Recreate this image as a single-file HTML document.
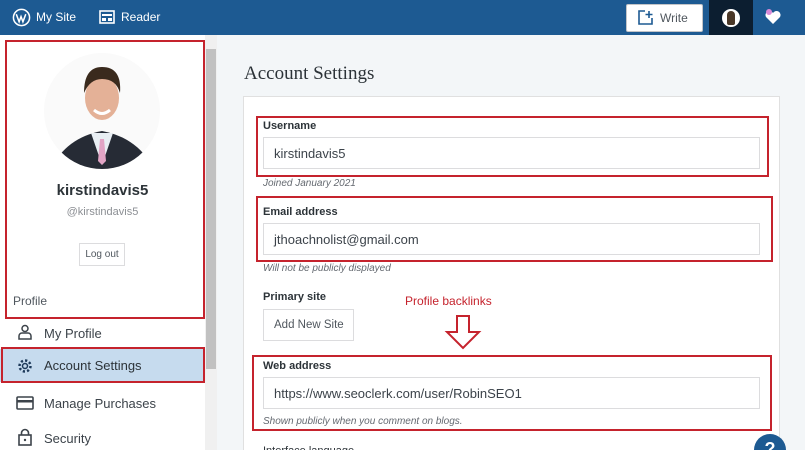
<!DOCTYPE html>
<html style="overflow:hidden;height:450px"><head><style>
*{box-sizing:border-box;margin:0;padding:0}
body{width:805px;height:450px;overflow:hidden;font-family:"Liberation Sans",sans-serif;background:#f3f6f8;position:relative;color:#2c3338}
.abs{position:absolute}
.top{left:0;top:0;width:805px;height:35px;background:#1d5a92}
.red{position:absolute;border:2px solid #c5232d}
.lbl{font-size:11px;font-weight:bold;color:#2c3338}
.inp{position:absolute;background:#fff;border:1px solid #dcdcde;font-size:13px;color:#3c434a;padding-left:10px;display:flex;align-items:center}
.hint{font-size:10px;font-style:italic;color:#646970}
.nav{position:absolute;left:0;width:205px;height:35px;display:flex;align-items:center;font-size:13px;color:#3c434a}
.nav span{margin-left:44px}
</style></head><body>
<div class="abs top"></div>
<svg class="abs" style="left:12px;top:8px" width="19" height="19" viewBox="0 0 20 20"><circle cx="10" cy="10" r="8.5" fill="none" stroke="#fff" stroke-width="1.6"/><path d="M4.5 6.5l3 8 2-5.5 2 5.5 3-8" fill="none" stroke="#fff" stroke-width="1.6"/></svg>
<div class="abs" style="left:36px;top:10px;color:#fff;font-size:12px">My Site</div>
<svg class="abs" style="left:99px;top:10px" width="16" height="14"><rect x="1" y="1" width="14" height="12" fill="none" stroke="#fff" stroke-width="1.6"/><rect x="3" y="4" width="10" height="2" fill="#fff"/><rect x="3" y="8" width="4" height="3" fill="#fff"/><rect x="9" y="8" width="4" height="3" fill="#fff"/></svg>
<div class="abs" style="left:121px;top:10px;color:#fff;font-size:12px">Reader</div>
<div class="abs" style="left:626px;top:4px;width:77px;height:28px;background:#fff;border-radius:2px;border:1px solid #c3c4c7"></div>
<svg class="abs" style="left:638px;top:10px" width="16" height="15"><path d="M7 1H1v13h13V8" fill="none" stroke="#1d5a92" stroke-width="1.6"/><path d="M11 1v7M7.5 4.5h7" stroke="#1d5a92" stroke-width="1.6"/></svg>
<div class="abs" style="left:660px;top:11px;font-size:12px;color:#50575e">Write</div>
<div class="abs" style="left:709px;top:0;width:44px;height:35px;background:#0c1e30"></div>
<div class="abs" style="left:722px;top:9px;width:18px;height:18px;border-radius:50%;background:#fff"></div>
<div class="abs" style="left:727px;top:11px;width:8px;height:14px;border-radius:4px 4px 2px 2px;background:#4a3828"></div>
<svg class="abs" style="left:764px;top:8px" width="18" height="18"><path d="M9 16L2 9a3.5 3.5 0 0 1 7-4 3.5 3.5 0 0 1 7 4z" fill="#fff"/><circle cx="5" cy="4" r="3" fill="#d98ad8"/></svg>

<div class="abs" style="left:0;top:35px;width:205px;height:415px;background:#fff"></div>
<div class="abs" style="left:205px;top:35px;width:12px;height:415px;background:#f0f0f0"></div>
<div class="abs" style="left:206px;top:49px;width:10px;height:320px;background:#c1c1c1"></div>

<svg class="abs" style="left:44px;top:53px" width="116" height="116" viewBox="0 0 116 116"><defs><clipPath id="c"><circle cx="58" cy="58" r="58"/></clipPath></defs><circle cx="58" cy="58" r="58" fill="#fafafa"/><g clip-path="url(#c)"><path d="M5 120 Q20 85 58 78 Q96 85 112 120z" fill="#262b35"/><path d="M47 80 L58 112 L69 80z" fill="#e8eef3"/><path d="M56 86 L60 86 L62 108 L58 112 L54 108z" fill="#e2a4c5"/><ellipse cx="58" cy="45" rx="17" ry="22" fill="#e4b197"/><path d="M40 40 Q40 14 58 14 Q78 14 76 40 Q72 26 58 26 Q46 26 40 40z" fill="#3a2a1d"/><path d="M50 57 Q58 64 66 57" stroke="#fff" stroke-width="3" fill="none"/></g></svg>
<div class="abs" style="left:0;top:182px;width:205px;text-align:center;font-size:15px;font-weight:bold;color:#2c3338">kirstindavis5</div>
<div class="abs" style="left:0;top:206px;width:205px;text-align:center;font-size:11px;color:#8c8f94">@kirstindavis5</div>
<div class="abs" style="left:79px;top:243px;width:46px;height:23px;border:1px solid #dcdcde;font-size:10px;color:#50575e;display:flex;align-items:center;justify-content:center">Log out</div>
<div class="abs" style="left:13px;top:294px;font-size:12px;color:#50575e">Profile</div>
<div class="red" style="left:5px;top:40px;width:200px;height:279px"></div>

<div class="nav" style="top:316px"><span>My Profile</span></div>
<svg class="abs" style="left:17px;top:324px" width="16" height="16"><circle cx="8" cy="4.5" r="3" fill="none" stroke="#3c434a" stroke-width="1.5"/><path d="M2 15v-3a3 3 0 0 1 3-3h6a3 3 0 0 1 3 3v3z" fill="none" stroke="#3c434a" stroke-width="1.5"/></svg>
<div class="nav" style="top:349px;height:33px;background:#c6dbee;color:#2c3338"><span>Account Settings</span></div>
<svg class="abs" style="left:17px;top:358px" width="16" height="16" viewBox="0 0 16 16"><circle cx="8" cy="8" r="2.5" fill="none" stroke="#1d3a5a" stroke-width="1.5"/><circle cx="8" cy="8" r="5.5" fill="none" stroke="#1d3a5a" stroke-width="2.5" stroke-dasharray="2.2 2.1"/></svg>
<div class="red" style="left:1px;top:347px;width:204px;height:36px"></div>
<div class="nav" style="top:386px"><span>Manage Purchases</span></div>
<svg class="abs" style="left:16px;top:396px" width="18" height="14"><rect x="1" y="1" width="16" height="12" rx="1" fill="none" stroke="#3c434a" stroke-width="1.6"/><rect x="1" y="4" width="16" height="2.5" fill="#3c434a"/></svg>
<div class="nav" style="top:421px"><span>Security</span></div>
<svg class="abs" style="left:18px;top:428px" width="14" height="18"><path d="M3.5 7V5a3.5 3.5 0 0 1 7 0v2" fill="none" stroke="#3c434a" stroke-width="1.6"/><rect x="1" y="7" width="12" height="10" fill="none" stroke="#3c434a" stroke-width="1.6"/><circle cx="7" cy="12" r="1.2" fill="#3c434a"/></svg>

<div class="abs" style="left:244px;top:63px;font-size:19px;font-family:'Liberation Serif',serif;color:#2c3338">Account Settings</div>
<div class="abs" style="left:243px;top:96px;width:537px;height:360px;background:#fff;border:1px solid #e0e0e0"></div>

<div class="abs lbl" style="left:263px;top:120px">Username</div>
<div class="inp" style="left:263px;top:137px;width:497px;height:32px">kirstindavis5</div>
<div class="red" style="left:256px;top:116px;width:513px;height:61px"></div>
<div class="abs hint" style="left:263px;top:178px">Joined January 2021</div>

<div class="abs lbl" style="left:263px;top:206px">Email address</div>
<div class="inp" style="left:263px;top:223px;width:497px;height:32px">jthoachnolist@gmail.com</div>
<div class="red" style="left:256px;top:196px;width:517px;height:66px"></div>
<div class="abs hint" style="left:263px;top:263px">Will not be publicly displayed</div>

<div class="abs lbl" style="left:263px;top:291px">Primary site</div>
<div class="inp" style="left:263px;top:309px;width:91px;height:32px;font-size:11.5px;color:#50575e">Add New Site</div>
<div class="abs" style="left:405px;top:294px;font-size:12px;color:#c5232d">Profile backlinks</div>
<svg class="abs" style="left:444px;top:315px" width="38" height="35"><path d="M13 1h12v16h10L19 33 3 17h10z" fill="#fff" stroke="#c5232d" stroke-width="2"/></svg>

<div class="abs lbl" style="left:263px;top:360px">Web address</div>
<div class="inp" style="left:263px;top:377px;width:497px;height:32px">https://www.seoclerk.com/user/RobinSEO1</div>
<div class="red" style="left:252px;top:355px;width:520px;height:76px"></div>
<div class="abs hint" style="left:263px;top:416px">Shown publicly when you comment on blogs.</div>
<div class="abs lbl" style="left:263px;top:445px;font-weight:normal">Interface language</div>
<div class="abs" style="left:754px;top:434px;width:32px;height:32px;border-radius:50%;background:#1d5a92;color:#fff;font-weight:bold;font-size:18px;text-align:center;line-height:30px">?</div>
</body></html>
